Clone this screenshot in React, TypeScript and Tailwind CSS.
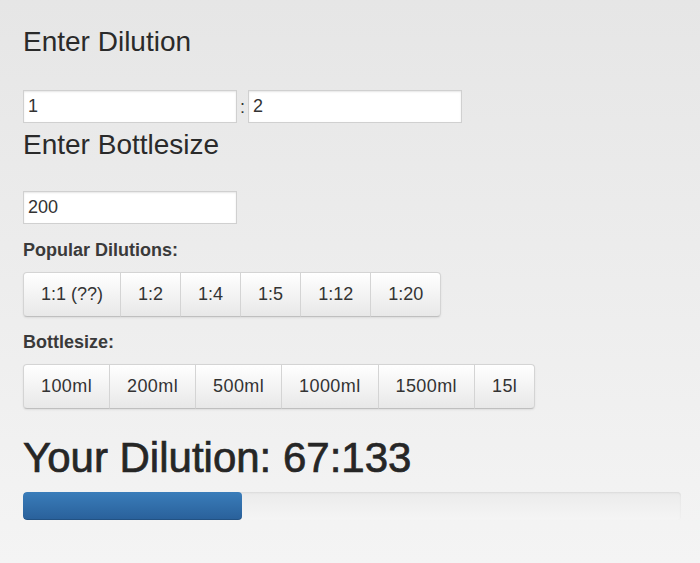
import { useState } from "react";

const DILUTIONS = ["1:1 (??)", "1:2", "1:4", "1:5", "1:12", "1:20"];
const BOTTLES = ["100ml", "200ml", "500ml", "1000ml", "1500ml", "15l"];

function BtnGroup({ items, wide }: { items: string[]; wide?: boolean }) {
  return (
    <div className="flex w-fit rounded-[4px] shadow-[0_1px_2px_rgba(0,0,0,0.08)]">
      {items.map((t, i) => (
        <button
          key={t}
          type="button"
          className={
            "h-[45px] border border-[#d4d4d4] border-b-[#bfbfbf] bg-gradient-to-b from-white to-[#e8e8e8] text-[18px] text-[#333] shadow-[inset_0_1px_0_rgba(255,255,255,0.6)] " +
            (wide ? "px-[17px] tracking-[0.4px] " : "px-[17px] ") +
            (i > 0 ? "-ml-px " : "") +
            (i === 0 ? "rounded-l-[4px] " : "") +
            (i === items.length - 1 ? "rounded-r-[4px]" : "")
          }
        >
          {t}
        </button>
      ))}
    </div>
  );
}

export default function App() {
  const [a, setA] = useState("1");
  const [b, setB] = useState("2");
  const [size, setSize] = useState("200");

  const pct = 33.3;

  return (
    <div className="min-h-[563px] bg-gradient-to-b from-[#e6e6e6] to-[#f4f4f4] px-[23px] font-['Liberation_Sans',Arial,sans-serif] text-[#333]">
      <h3 className="pt-[25px] text-[28px] leading-[34px] text-[#2a2a2a]">Enter Dilution</h3>

      <div className="mt-[31px] flex items-center">
        <input
          value={a}
          onChange={(e) => setA(e.target.value)}
          className="h-[33px] w-[214px] border border-[#d0d0d0] bg-white px-[4px] text-[18px] text-[#333] shadow-[inset_0_1px_2px_rgba(0,0,0,0.1)] outline-none"
        />
        <span className="w-[11px] text-center text-[18px] leading-none">:</span>
        <input
          value={b}
          onChange={(e) => setB(e.target.value)}
          className="h-[33px] w-[214px] border border-[#d0d0d0] bg-white px-[4px] text-[18px] text-[#333] shadow-[inset_0_1px_2px_rgba(0,0,0,0.1)] outline-none"
        />
      </div>

      <h3 className="mt-[5px] text-[28px] leading-[34px] text-[#2a2a2a]">Enter Bottlesize</h3>

      <input
        value={size}
        onChange={(e) => setSize(e.target.value)}
        className="mt-[29px] block h-[33px] w-[214px] border border-[#d0d0d0] bg-white px-[4px] text-[18px] text-[#333] shadow-[inset_0_1px_2px_rgba(0,0,0,0.1)] outline-none"
      />

      <div className="mt-[16px] text-[18px] font-bold leading-[20px] text-[#3a3a3a]">Popular Dilutions:</div>
      <div className="mt-[12px]">
        <BtnGroup items={DILUTIONS} />
      </div>

      <div className="mt-[15px] text-[18px] font-bold leading-[20px] text-[#3a3a3a]">Bottlesize:</div>
      <div className="mt-[12px]">
        <BtnGroup items={BOTTLES} wide />
      </div>

      <h2 className="mt-[25px] text-[42px] leading-[48px] text-[#262626] [-webkit-text-stroke:0.7px_#262626]">
        Your Dilution: 67:133
      </h2>

      <div className="mt-[10px] h-[28px] w-[658px] overflow-hidden rounded-[4px] bg-gradient-to-b from-[#ebebeb] to-[#f5f5f5] shadow-[inset_0_1px_2px_rgba(0,0,0,0.08)]">
        <div
          className="h-full rounded-[4px] bg-gradient-to-b from-[#3a7dba] to-[#29609a] shadow-[inset_0_-1px_0_rgba(0,0,0,0.15)]"
          style={{ width: `${pct}%` }}
        />
      </div>
    </div>
  );
}
